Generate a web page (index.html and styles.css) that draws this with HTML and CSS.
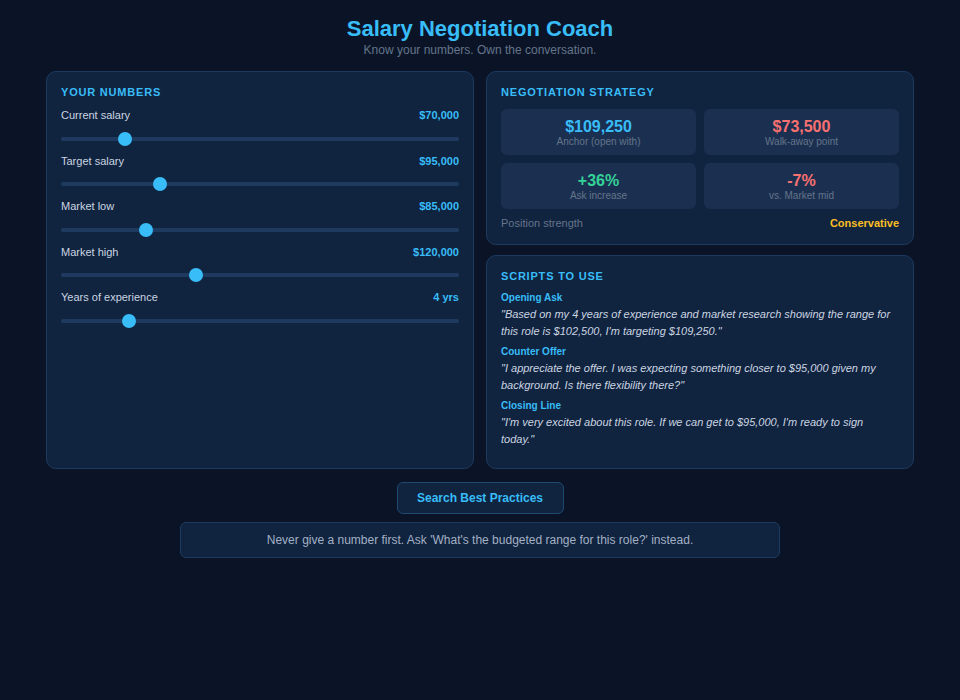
FILE: index.html
```html
<!DOCTYPE html>
<html>
<head>
<meta charset="utf-8">
<link rel="stylesheet" href="styles.css">
</head>
<body>
<div class="app">
  <header class="header">
    <h1 class="title">Salary Negotiation Coach</h1>
    <p class="subtitle">Know your numbers. Own the conversation.</p>
  </header>
  <div class="grid">
    <section class="panel">
      <h2 class="panel-title">YOUR NUMBERS</h2>
      <div class="fields">
        <div class="field">
          <div class="field-row"><span class="field-label">Current salary</span><span class="field-value">$70,000</span></div>
          <input class="slider" type="range" min="30000" max="300000" value="70000">
        </div>
        <div class="field">
          <div class="field-row"><span class="field-label">Target salary</span><span class="field-value">$95,000</span></div>
          <input class="slider" type="range" min="30000" max="300000" value="95000">
        </div>
        <div class="field">
          <div class="field-row"><span class="field-label">Market low</span><span class="field-value">$85,000</span></div>
          <input class="slider" type="range" min="30000" max="300000" value="85000">
        </div>
        <div class="field">
          <div class="field-row"><span class="field-label">Market high</span><span class="field-value">$120,000</span></div>
          <input class="slider" type="range" min="30000" max="300000" value="120000">
        </div>
        <div class="field">
          <div class="field-row"><span class="field-label">Years of experience</span><span class="field-value">4 yrs</span></div>
          <input class="slider" type="range" min="0" max="25" value="4">
        </div>
      </div>
    </section>
    <div class="col">
      <section class="panel">
        <h2 class="panel-title">NEGOTIATION STRATEGY</h2>
        <div class="stats">
          <div class="stat"><div class="stat-value blue">$109,250</div><div class="stat-label">Anchor (open with)</div></div>
          <div class="stat"><div class="stat-value red">$73,500</div><div class="stat-label">Walk-away point</div></div>
          <div class="stat"><div class="stat-value green">+36%</div><div class="stat-label">Ask increase</div></div>
          <div class="stat"><div class="stat-value red">-7%</div><div class="stat-label">vs. Market mid</div></div>
        </div>
        <div class="strength"><span class="strength-label">Position strength</span><span class="strength-value">Conservative</span></div>
      </section>
      <section class="panel panel-grow">
        <h2 class="panel-title">SCRIPTS TO USE</h2>
        <div class="script">
          <div class="script-title">Opening Ask</div>
          <p class="script-text">"Based on my 4 years of experience and market research showing the range for this role is $102,500, I'm targeting $109,250."</p>
        </div>
        <div class="script">
          <div class="script-title">Counter Offer</div>
          <p class="script-text">"I appreciate the offer. I was expecting something closer to $95,000 given my background. Is there flexibility there?"</p>
        </div>
        <div class="script">
          <div class="script-title">Closing Line</div>
          <p class="script-text">"I'm very excited about this role. If we can get to $95,000, I'm ready to sign today."</p>
        </div>
      </section>
    </div>
  </div>
  <div class="actions">
    <button class="btn">Search Best Practices</button>
  </div>
  <div class="tip">Never give a number first. Ask 'What's the budgeted range for this role?' instead.</div>
</div>
</body>
</html>
```
FILE: styles.css
```css
* { box-sizing: border-box; }
html, body { margin: 0; padding: 0; }
body {
  background: #0b1426;
  font-family: "Liberation Sans", Arial, sans-serif;
  color: #cbd5e1;
  min-height: 700px;
}
.app {
  width: 868px;
  margin: 0 auto;
  padding-top: 15px;
}
.header { text-align: center; }
.title {
  margin: 0;
  font-size: 22px;
  font-weight: 700;
  color: #38bdf8;
  line-height: 28px;
}
.subtitle {
  margin: 0;
  font-size: 12px;
  color: #64748b;
  line-height: 14px;
}
.grid {
  display: grid;
  grid-template-columns: 1fr 1fr;
  gap: 12px;
  margin-top: 14px;
  min-height: 398px;
}
.col {
  display: flex;
  flex-direction: column;
  gap: 10px;
}
.panel {
  background: #10233f;
  border: 1px solid #1e3a5f;
  border-radius: 10px;
  padding: 14px 14px;
}
.panel-grow { flex: 1; }
.panel-title {
  margin: 0 0 8px;
  font-size: 11px;
  font-weight: 700;
  letter-spacing: 0.8px;
  color: #38bdf8;
  line-height: 13px;
}
.fields {
  display: flex;
  flex-direction: column;
  padding-top: 1px;
}
.field-row {
  display: flex;
  justify-content: space-between;
  line-height: 14px;
}
.field-label { font-size: 11px; color: #cbd5e1; }
.field-value { font-size: 11px; font-weight: 700; color: #38bdf8; }
.slider {
  -webkit-appearance: none;
  appearance: none;
  display: block;
  width: 100%;
  height: 4px;
  margin: 14.5px 0 13px;
  background: #1e3a5f;
  border-radius: 2px;
  outline: none;
}
.slider::-webkit-slider-thumb {
  -webkit-appearance: none;
  appearance: none;
  width: 14px;
  height: 14px;
  border-radius: 50%;
  background: #38bdf8;
  border: none;
}
.stats {
  display: grid;
  grid-template-columns: 1fr 1fr;
  gap: 8px;
  margin-top: 10px;
}
.stat {
  background: #1b3050;
  border-radius: 6px;
  height: 46px;
  display: flex;
  flex-direction: column;
  align-items: center;
  justify-content: center;
}
.stat-value { font-size: 16px; font-weight: 700; line-height: 19px; }
.stat-label { font-size: 10px; color: #64748b; line-height: 12px; }
.blue { color: #38bdf8; }
.red { color: #f87171; }
.green { color: #34d399; }
.strength {
  display: flex;
  justify-content: space-between;
  margin-top: 7px;
  font-size: 11px;
  line-height: 14px;
}
.strength-label { color: #64748b; }
.strength-value { color: #fbbf24; font-weight: 700; }
.script { margin-top: 7px; }
.script + .script { margin-top: 5px; }
.script-title {
  font-size: 10px;
  font-weight: 700;
  color: #38bdf8;
  line-height: 13px;
}
.script-text {
  margin: 2px 0 0;
  font-size: 11px;
  font-style: italic;
  color: #cbd5e1;
  line-height: 17px;
}
.actions {
  display: flex;
  justify-content: center;
  margin-top: 13px;
}
.btn {
  font-family: inherit;
  background: #10233f;
  border: 1px solid #1f4a70;
  border-radius: 6px;
  color: #38bdf8;
  font-size: 12px;
  font-weight: 700;
  width: 167px;
  height: 32px;
  cursor: pointer;
}
.tip {
  width: 600px;
  margin: 8px auto 0;
  background: #10233f;
  border: 1px solid #1e3a5f;
  border-radius: 6px;
  height: 36px;
  display: flex;
  align-items: center;
  justify-content: center;
  font-size: 12px;
  color: #a3b1c4;
}
```
